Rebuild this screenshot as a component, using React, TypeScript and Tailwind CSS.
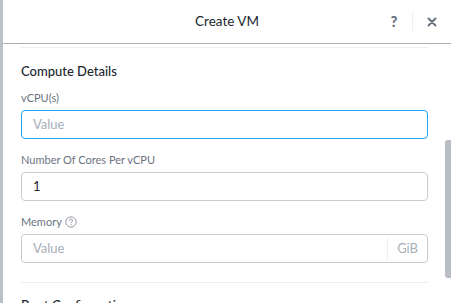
import React from 'react';

const font = { fontFamily: 'Lato, "Open Sans", Arial, sans-serif' };

function Field({ label, children }: { label: React.ReactNode; children: React.ReactNode }) {
  return (
    <div className="flex flex-col gap-[5px]">
      <div className="flex items-center gap-[3px] h-[14px] text-[11px] leading-[14px] text-[#6b7380]">{label}</div>
      {children}
    </div>
  );
}

export default function App() {
  return (
    <div className="flex w-[451px] h-[303px] overflow-hidden bg-white" style={font}>
      <div className="w-[3px] shrink-0 bg-[#bcc0c7]" />
      <div className="relative flex-1 flex flex-col min-w-0">
        <div className="h-[44px] shrink-0 flex items-center border-b border-[#abafb5] bg-white">
          <div className="w-[75px] shrink-0" />
          <div className="flex-1 text-center text-[13.5px] text-[#22272e] leading-none">Create VM</div>
          <div className="w-[75px] shrink-0 flex items-center h-full">
            <span className="w-[36px] text-center text-[15px] font-black text-[#6b7380]">?</span>
            <div className="w-px h-[19px] bg-[#eceef0]" />
            <span className="w-[38px] flex justify-center text-[#6b7380]">
              <svg width="10" height="10" viewBox="0 0 10 10">
                <path d="M1.5 1.5 L8.5 8.5 M8.5 1.5 L1.5 8.5" stroke="currentColor" strokeWidth="2" strokeLinecap="round" />
              </svg>
            </span>
          </div>
        </div>

        <div className="flex-1 pl-[18px] pr-[23px] overflow-hidden">
          <div className="mt-[3px] h-px bg-[#eef0f2]" />
          <div className="mt-[15px] text-[13px] leading-[16px] font-medium text-[#22272e]">Compute Details</div>

          <div className="mt-[12px] flex flex-col gap-[14px]">
            <Field label="vCPU(s)">
              <div className="h-[29px] rounded-[4px] border border-[#1ea6ef] flex items-center px-[11px] text-[13px] text-[#a7aeb8]">Value</div>
            </Field>
            <Field label="Number Of Cores Per vCPU">
              <div className="h-[29px] rounded-[4px] border border-[#c8ccd2] flex items-center px-[11px] text-[13px] text-[#22272e]">1</div>
            </Field>
            <Field
              label={
                <>
                  Memory
                  <svg width="12" height="12" viewBox="0 0 12 12" className="text-[#8a919c]">
                    <circle cx="6" cy="6" r="5.2" fill="none" stroke="currentColor" strokeWidth="0.9" />
                    <path d="M4.5 4.6 a1.5 1.5 0 1 1 2.2 1.3 c-0.5 0.3 -0.7 0.6 -0.7 1.2" fill="none" stroke="currentColor" strokeWidth="0.9" />
                    <circle cx="6" cy="8.7" r="0.6" fill="currentColor" />
                  </svg>
                </>
              }
            >
              <div className="h-[29px] rounded-[4px] border border-[#c8ccd2] flex items-center text-[13px]">
                <span className="flex-1 px-[11px] text-[#a7aeb8]">Value</span>
                <div className="w-px h-[22px] bg-[#eceef0]" />
                <span className="px-[9px] text-[#a7aeb8]">GiB</span>
              </div>
            </Field>
          </div>

          <div className="mt-[19px] h-px bg-[#eceef0]" />
          <div className="mt-[14px] text-[13px] leading-[16px] font-medium text-[#22272e]">Boot Configuration</div>
        </div>

        <div className="absolute right-0 top-[140px] w-[6px] h-[138px] rounded-l-[3px] bg-[#b8bcc4]" />
      </div>
    </div>
  );
}
